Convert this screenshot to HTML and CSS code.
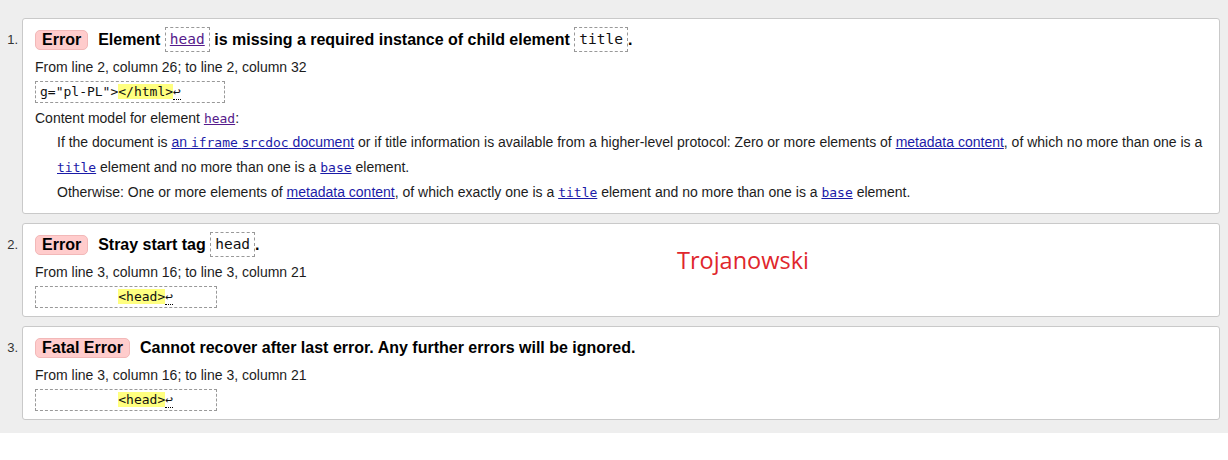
FILE: index.html
```html
<!DOCTYPE html>
<html lang="en">
<head>
<meta charset="utf-8">
<title>Validator messages</title>
<link rel="stylesheet" href="styles.css">
</head>
<body>
<div class="results">
  <div class="item">
    <span class="num">1.</span>
    <div class="card">
      <p class="msg"><span class="badge">Error</span><span class="text">Element <code class="tag"><a class="visited" href="#head">head</a></code> is missing a required instance of child element <code class="tag">title</code>.</span></p>
      <p class="loc">From line 2, column 26; to line 2, column 32</p>
      <code class="extract">g="pl-PL"&gt;<b>&lt;/html&gt;</b><span class="lf">↩</span>     </code>
      <dl class="model">
        <dt>Content model for element <code><a class="visited" href="#head">head</a></code>:</dt>
        <dd>
          <p>If the document is <a href="#srcdoc">an <code>iframe</code> <code>srcdoc</code> document</a> or if title information is available from a higher-level protocol: Zero or more elements of <a href="#meta">metadata content</a>, of which no more than one is a <code><a href="#title">title</a></code> element and no more than one is a <code><a href="#base">base</a></code> element.</p>
          <p>Otherwise: One or more elements of <a href="#meta">metadata content</a>, of which exactly one is a <code><a href="#title">title</a></code> element and no more than one is a <code><a href="#base">base</a></code> element.</p>
        </dd>
      </dl>
    </div>
  </div>
  <div class="item">
    <span class="num">2.</span>
    <div class="card annotated">
      <p class="msg"><span class="badge">Error</span><span class="text">Stray start tag <code class="tag">head</code>.</span></p>
      <p class="loc">From line 3, column 16; to line 3, column 21</p>
      <code class="extract">          <b>&lt;head&gt;</b><span class="lf">↩</span>     </code>
      <span class="signature">Trojanowski</span>
    </div>
  </div>
  <div class="item">
    <span class="num">3.</span>
    <div class="card">
      <p class="msg"><span class="badge">Fatal Error</span><span class="text">Cannot recover after last error. Any further errors will be ignored.</span></p>
      <p class="loc">From line 3, column 16; to line 3, column 21</p>
      <code class="extract">          <b>&lt;head&gt;</b><span class="lf">↩</span>     </code>
    </div>
  </div>
</div>
</body>
</html>
```

FILE: styles.css
```css
html, body {
  margin: 0;
  padding: 0;
  background: #fff;
}

body {
  font-family: "Liberation Sans", Arial, sans-serif;
  font-size: 14px;
  color: #1c1c1c;
}

.results {
  background: #eeeeee;
  padding: 18px 8px 13px 0;
  display: flex;
  flex-direction: column;
  gap: 9px;
}

.item {
  display: flex;
}

.num {
  width: 18px;
  flex: none;
  padding: 9px 4px 0 0;
  text-align: right;
  font-size: 13px;
  line-height: 25px;
  color: #333;
}

.card {
  flex: 1;
  background: #fff;
  border: 1px solid #c9c9c9;
  border-radius: 3px;
  padding: 8px 12px 8px 12px;
}

.annotated {
  position: relative;
}

.msg {
  margin: 0;
  height: 25px;
  display: flex;
  align-items: center;
  font-size: 16px;
  font-weight: bold;
  color: #000;
}

.badge {
  flex: none;
  background: #ffcccc;
  border: 1px solid #f2b8b8;
  border-radius: 5px;
  padding: 0 6px;
  line-height: 18px;
  margin-right: 10px;
}

.text {
  line-height: 25px;
  white-space: nowrap;
}

code {
  font-family: "DejaVu Sans Mono", "Liberation Mono", monospace;
  font-size: 13px;
}

.tag {
  display: inline-block;
  vertical-align: 0.5px;
  font-weight: normal;
  font-size: 14.5px;
  line-height: 23px;
  padding: 0 4px;
  border: 1px dashed #999;
  color: #111;
}

a {
  color: #1b1ba8;
}

a.visited {
  color: #551a8b;
}

.loc {
  margin: 3px 0 2px;
  line-height: 24px;
}

.extract {
  display: block;
  width: fit-content;
  white-space: pre;
  line-height: 20px;
  padding: 0 4px;
  border: 1px dashed #999;
  color: #111;
}

.extract b {
  font-weight: normal;
  background: #ffff80;
}

.lf {
  border-bottom: 1px dotted #000;
}

.model {
  margin: 4px 0 0;
}

.model dt {
  line-height: 22px;
}

.model dd {
  margin: 0 0 0 22px;
}

.model dd p {
  margin: 0;
  line-height: 25px;
}

.signature {
  position: absolute;
  left: 654px;
  top: 20px;
  font-family: "Open Sans", "Noto Sans", sans-serif;
  font-size: 23.5px;
  color: #e0262c;
}
```
